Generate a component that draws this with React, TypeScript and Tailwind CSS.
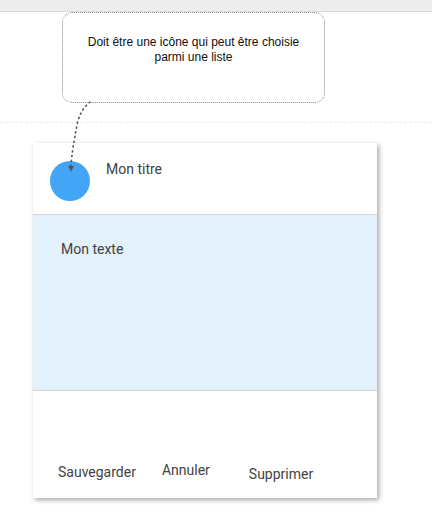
export default function App() {
  return (
    <div className="relative h-[520px] w-[432px] overflow-hidden bg-white font-['Roboto',sans-serif]">
      {/* top bar */}
      <div className="h-[12px] border-b border-[#dcdcdc] bg-[#ededed]" />

      {/* annotation bubble */}
      <div className="ml-[62px] flex h-[91px] w-[263px] justify-center rounded-[10px] border border-dotted border-[#8a8a8a] pt-[22px] text-center font-['Liberation_Sans',Arial,sans-serif] text-[12px] leading-[15px] text-[#111]">
        <p>
          Doit être une icône qui peut être choisie
          <br />
          parmi une liste
        </p>
      </div>

      <div className="mt-[19px] border-t border-dashed border-[#ececec]" />

      {/* card */}
      <div className="ml-[33px] mt-[20px] flex h-[355px] w-[344px] flex-col bg-white shadow-[2px_2px_5px_rgba(0,0,0,0.35)]">
        <div className="flex h-[72px] shrink-0 border-b border-[#d6d6d6]">
          <div className="ml-[17px] mt-[18px] h-[40px] w-[40px] rounded-full bg-[#42a5f5]" />
          <span className="ml-[16px] mt-[17px] text-[14px] leading-[18px] text-[#424242]">Mon titre</span>
        </div>
        <div className="h-[176px] shrink-0 border-b border-[#c8d6e0] bg-[#e3f1fc] pl-[28px] pt-[25px] text-[14px] leading-[18px] text-[#424242]">
          Mon texte
        </div>
        <div className="flex flex-1 items-start pt-[72px] text-[14px] leading-[18px] text-[#424242]">
          <span className="ml-[25px]">Sauvegarder</span>
          <span className="ml-[26px] -mt-[2px]">Annuler</span>
          <span className="ml-[39px] mt-[2px]">Supprimer</span>
        </div>
      </div>

      {/* dotted arrow */}
      <svg className="pointer-events-none absolute left-0 top-0" width="432" height="520">
        <path
          d="M90 102 Q80 110 77 125 Q72 150 71 166"
          fill="none"
          stroke="#555"
          strokeWidth="1.6"
          strokeDasharray="1.2 3.6"
          strokeLinecap="round"
        />
        <path d="M68 166 L74 166 L71 172 Z" fill="#555" />
      </svg>
    </div>
  );
}
